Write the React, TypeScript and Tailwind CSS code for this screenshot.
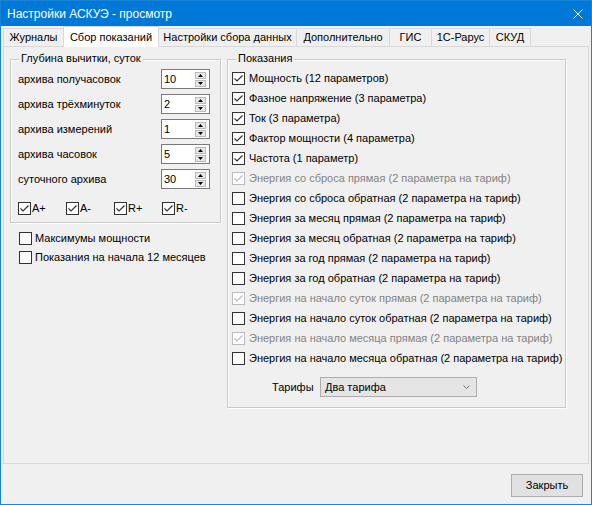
import React from 'react';

// Settings dialog, "Сбор показаний" tab

interface CheckProps {
  checked?: boolean;
  disabled?: boolean;
}

const CheckBox: React.FC<CheckProps> = ({ checked, disabled }) => (
  <span
    className={`flex h-[13px] w-[13px] shrink-0 items-center justify-center border bg-white ${
      disabled ? 'border-[#bcbcbc]' : 'border-[#333333]'
    }`}
  >
    {checked && (
      <svg width="11" height="11" viewBox="0 0 11 11">
        <polyline
          points="1.5,5.5 4,8 9.5,2.5"
          fill="none"
          stroke={disabled ? '#bcbcbc' : '#333333'}
          strokeWidth="1.2"
        />
      </svg>
    )}
  </span>
);

const Spin: React.FC<{ value: string }> = ({ value }) => (
  <div className="flex h-[20px] w-[49px] items-center border border-[#7a7a7a] bg-white pl-[2px]">
    <span className="flex-1 text-[11px] leading-none text-black">{value}</span>
    <div className="mr-[3px] flex flex-col gap-[1px]">
      <span className="flex h-[7px] w-[11px] items-center justify-center border border-[#b9b9b9] bg-[#e8e8e8]">
        <svg width="5" height="3" viewBox="0 0 5 3">
          <polygon points="2.5,0 5,3 0,3" fill="#000" />
        </svg>
      </span>
      <span className="flex h-[7px] w-[11px] items-center justify-center border border-[#b9b9b9] bg-[#e8e8e8]">
        <svg width="5" height="3" viewBox="0 0 5 3">
          <polygon points="0,0 5,0 2.5,3" fill="#000" />
        </svg>
      </span>
    </div>
  </div>
);

const GroupBox: React.FC<{ title: string; className?: string; children: React.ReactNode }> = ({
  title,
  className,
  children,
}) => (
  <div
    className={`relative border border-[#c9c9c9] shadow-[inset_1px_1px_0_#ffffff,1px_1px_0_#ffffff] ${className ?? ''}`}
  >
    <span className="absolute left-[8px] top-[-8px] bg-[#f0f0f0] px-[2px] text-[11px] leading-[13px] text-black">
      {title}
    </span>
    {children}
  </div>
);

const tabs = [
  { label: 'Журналы', w: 'w-[61px]' },
  { label: 'Сбор показаний', w: 'w-[96px]', active: true },
  { label: 'Настройки сбора данных', w: 'w-[139px]' },
  { label: 'Дополнительно', w: 'w-[94px]' },
  { label: 'ГИС', w: 'w-[43px]' },
  { label: '1С-Рарус', w: 'w-[59px]' },
  { label: 'СКУД', w: 'w-[42px]' },
];

const depth = [
  { label: 'архива получасовок', value: '10' },
  { label: 'архива трёхминуток', value: '2' },
  { label: 'архива измерений', value: '1' },
  { label: 'архива часовок', value: '5' },
  { label: 'суточного архива', value: '30' },
];

const readings: { label: string; checked?: boolean; disabled?: boolean }[] = [
  { label: 'Мощность (12 параметров)', checked: true },
  { label: 'Фазное напряжение (3 параметра)', checked: true },
  { label: 'Ток (3 параметра)', checked: true },
  { label: 'Фактор мощности (4 параметра)', checked: true },
  { label: 'Частота (1 параметр)', checked: true },
  { label: 'Энергия со сброса прямая (2 параметра на тариф)', checked: true, disabled: true },
  { label: 'Энергия со сброса обратная (2 параметра на тариф)' },
  { label: 'Энергия за месяц прямая (2 параметра на тариф)' },
  { label: 'Энергия за месяц обратная (2 параметра на тариф)' },
  { label: 'Энергия за год прямая (2 параметра на тариф)' },
  { label: 'Энергия за год обратная (2 параметра на тариф)' },
  { label: 'Энергия на начало суток прямая (2 параметра на тариф)', checked: true, disabled: true },
  { label: 'Энергия на начало суток обратная (2 параметра на тариф)' },
  { label: 'Энергия на начало месяца прямая (2 параметра на тариф)', checked: true, disabled: true },
  { label: 'Энергия на начало месяца обратная (2 параметра на тариф)' },
];

export default function App() {
  return (
    <div className="flex h-[505px] w-[592px] flex-col border border-[#1883d7] bg-[#f0f0f0] font-['Liberation_Sans',Arial,sans-serif] text-black">
      {/* title bar */}
      <div className="flex h-[25px] shrink-0 items-center bg-[#0078d7] pl-[6px] pr-[8px]">
        <span className="flex-1 text-[12px] text-white">Настройки АСКУЭ - просмотр</span>
        <svg width="10" height="10" viewBox="0 0 10 10">
          <path d="M0.5 0.5 L9.5 9.5 M9.5 0.5 L0.5 9.5" stroke="#ffffff" strokeWidth="1" />
        </svg>
      </div>

      {/* tabs */}
      <div className="flex h-[20px] shrink-0 items-end pl-[2px]">
        {tabs.map((t, i) =>
          t.active ? (
            <div
              key={t.label}
              className={`relative z-10 -ml-px mb-[-1px] flex h-[21px] items-center justify-center border border-b-0 border-[#d9d9d9] bg-white text-[11px] ${t.w}`}
            >
              {t.label}
            </div>
          ) : (
            <div
              key={t.label}
              className={`flex h-[18px] items-center justify-center border border-b-0 border-[#d9d9d9] bg-[#f0f0f0] text-[11px] ${t.w} ${i > 0 ? '-ml-px' : ''}`}
            >
              {t.label}
            </div>
          )
        )}
      </div>

      {/* tab page */}
      <div className="mx-[2px] flex h-[418px] shrink-0 border border-[#d9d9d9] pl-[6px] pt-[12px]">
        <div className="flex w-[211px] flex-col">
          <GroupBox title="Глубина вычитки, суток" className="pb-[7px] pl-[7px] pr-[10px] pt-[9px]">
            <div className="flex flex-col gap-[5px]">
              {depth.map((d) => (
                <div key={d.label} className="flex h-[20px] items-center justify-between">
                  <span className="text-[11px]">{d.label}</span>
                  <Spin value={d.value} />
                </div>
              ))}
            </div>
            <div className="mt-[13px] flex">
              {['A+', 'A-', 'R+', 'R-'].map((l) => (
                <div key={l} className="flex h-[13px] w-[48px] items-center">
                  <CheckBox checked />
                  <span className="ml-[1px] text-[11px]">{l}</span>
                </div>
              ))}
            </div>
          </GroupBox>

          <div className="mt-[6px] flex flex-col pl-[9px]">
            <div className="flex h-[19px] items-center">
              <CheckBox />
              <span className="ml-[3px] text-[11px]">Максимумы мощности</span>
            </div>
            <div className="flex h-[19px] items-center">
              <CheckBox />
              <span className="ml-[3px] text-[11px]">Показания на начала 12 месяцев</span>
            </div>
          </div>
        </div>

        <GroupBox title="Показания" className="ml-[6px] h-[349px] w-[339px] pl-[4px] pt-[8px]">
          {readings.map((r) => (
            <div key={r.label} className="flex h-[20px] items-center">
              <CheckBox checked={r.checked} disabled={r.disabled} />
              <span className={`ml-[4px] text-[11px] ${r.disabled ? 'text-[#838383]' : ''}`}>{r.label}</span>
            </div>
          ))}
          <div className="mt-[9px] flex items-center">
            <span className="ml-[40px] w-[48px] text-[11px]">Тарифы</span>
            <div className="flex h-[20px] w-[157px] items-center border border-[#adadad] bg-[#e5e5e5] pl-[4px] pr-[6px]">
              <span className="flex-1 text-[11px]">Два тарифа</span>
              <svg width="7" height="4" viewBox="0 0 7 4">
                <polyline points="0.5,0.5 3.5,3.5 6.5,0.5" fill="none" stroke="#707070" strokeWidth="1" />
              </svg>
            </div>
          </div>
        </GroupBox>
      </div>

      {/* footer */}
      <div className="flex flex-1 items-start justify-end pr-[8px] pt-[10px]">
        <button className="flex h-[23px] w-[72px] items-center justify-center border border-[#adadad] bg-[#e1e1e1] text-[11px]">
          Закрыть
        </button>
      </div>
    </div>
  );
}
